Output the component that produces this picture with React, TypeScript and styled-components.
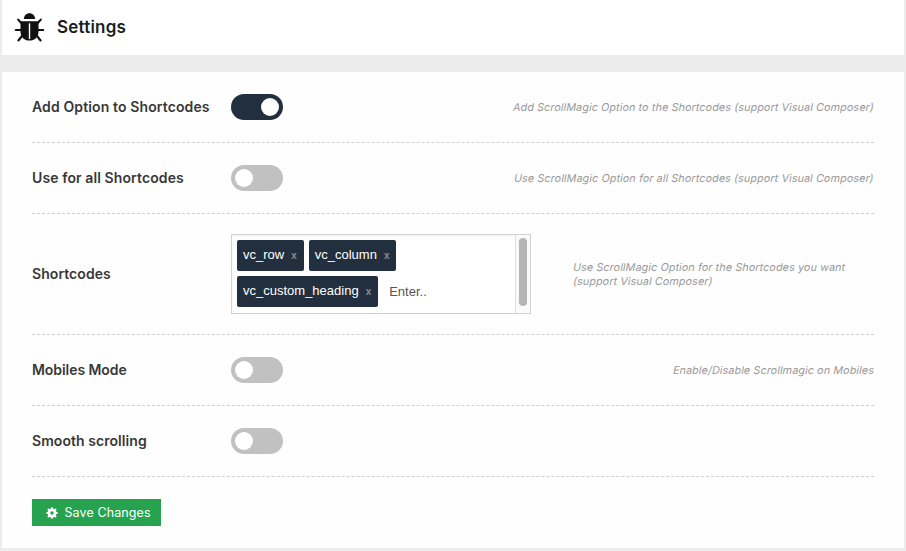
import React, { useState } from "react";
import styled, { createGlobalStyle } from "styled-components";

const GlobalStyle = createGlobalStyle`
  * { box-sizing: border-box; }
  body {
    margin: 0;
    background: #ececec;
    font-family: Inter, "Liberation Sans", sans-serif;
    overflow: hidden;
  }
`;

const Page = styled.div`
  display: flex;
  flex-direction: column;
  gap: 17px;
  height: 551px;
  padding: 0 2px 3px;
`;

const Header = styled.header`
  display: flex;
  align-items: center;
  height: 55px;
  padding-left: 12px;
  background: #fff;
`;

const Logo = styled.svg`
  display: block;
  width: 32px;
  height: 32px;
`;

const Title = styled.h1`
  margin: 0 0 2px 11px;
  font-size: 17px;
  line-height: 20px;
  font-weight: 600;
  letter-spacing: 0.2px;
  color: #191e23;
`;

const Panel = styled.main`
  flex: 1;
  padding: 0 30px;
  background: #fefefe;
`;

const Row = styled.section<{ $tall?: boolean }>`
  display: flex;
  align-items: center;
  height: ${(p) => (p.$tall ? 121 : 71)}px;
  border-bottom: 1px dashed #cfcfcf;
`;

const Label = styled.div<{ $spacing: number }>`
  flex: 0 0 199px;
  font-size: 14px;
  line-height: 18px;
  font-weight: 600;
  letter-spacing: ${(p) => p.$spacing}px;
  white-space: nowrap;
  color: #383838;
`;

const Switch = styled.button<{ $on: boolean }>`
  display: flex;
  align-items: center;
  justify-content: ${(p) => (p.$on ? "flex-end" : "flex-start")};
  width: 52px;
  height: 26px;
  padding: 0 4px;
  border: 0;
  border-radius: 13px;
  background: ${(p) => (p.$on ? "#222f3e" : "#c1c1c1")};
`;

const Knob = styled.span`
  width: 18px;
  height: 18px;
  border-radius: 50%;
  background: #fff;
`;

const Description = styled.p<{ $aside?: boolean }>`
  margin: ${(p) => (p.$aside ? "2px 0 0 42px" : "2px 0 0 auto")};
  font-size: 10.75px;
  line-height: 14px;
  letter-spacing: 0.115px;
  white-space: nowrap;
  color: #999;
`;

const Slanted = styled.span`
  display: block;
  transform: skewX(-11deg);
`;

const TagField = styled.div`
  display: flex;
  width: 300px;
  height: 80px;
  border: 1px solid #d2d2d2;
  background: #fff;
  box-shadow: inset 0 1px 2px rgba(0, 0, 0, 0.07);
  font-family: "Liberation Sans", sans-serif;
  font-size: 13px;
`;

const TagList = styled.div`
  display: flex;
  flex: 1;
  flex-wrap: wrap;
  align-content: flex-start;
  gap: 5px;
  padding: 5px;
`;

const Tag = styled.span`
  display: flex;
  align-items: center;
  height: 31px;
  padding: 0 6px 2px;
  border-radius: 2px;
  background: #222f3e;
  color: #fff;
`;

const Remove = styled.span`
  margin: 2px 1px 0 7px;
  font-size: 10px;
  font-weight: 700;
  color: #848b93;
`;

const TagInput = styled.input`
  width: 90px;
  height: 31px;
  padding: 0 0 0 6px;
  border: 0;
  outline: 0;
  background: transparent;
  font: inherit;
  color: #555;
  &::placeholder { color: #555; opacity: 1; }
`;

const ScrollTrack = styled.div`
  width: 15px;
  padding: 3px 3px 0;
  border-left: 1px solid #dedede;
  background: #fafafa;
`;

const ScrollThumb = styled.div`
  width: 8px;
  height: 68px;
  border-radius: 4px;
  background: #b5b5b5;
`;

const SaveButton = styled.button`
  display: flex;
  align-items: center;
  width: 129px;
  height: 27px;
  margin-top: 22px;
  padding: 0 0 0 14px;
  border: 0;
  background: #27a350;
  color: #fff;
  font-family: inherit;
  font-size: 12.5px;
  letter-spacing: 0.1px;
  white-space: nowrap;
`;

const Gear = styled.svg`
  width: 12px;
  height: 12px;
  margin-right: 6.5px;
`;

const BugIcon = () => (
  <Logo viewBox="0 0 32 32">
    <g fill="none" stroke="#111" strokeWidth="2.1" strokeLinecap="round" strokeLinejoin="round">
      <path d="M8 11.8 4.2 7.6M23 11.8l3.8-4.2M8 18H1.8M23 18h6.2M8 24l-3.6 4.5M23 24l3.6 4.5" />
    </g>
    <path fill="#111" d="M9.8 7C10 3.6 12.4 1.2 15.5 1.2s5.5 2.4 5.7 5.8z" />
    <path fill="#111" d="M6.5 9.3h18v10.2c0 5.8-3.9 9.1-9 9.1s-9-3.3-9-9.1z" />
    <path fill="none" stroke="#fff" strokeWidth="1.4" d="M15.5 11.3v15.7" />
  </Logo>
);

const GearIcon = () => (
  <Gear viewBox="0 0 24 24">
    <circle cx="12" cy="12" r="6.2" fill="none" stroke="#fff" strokeWidth="5.3" />
    <path stroke="#fff" strokeWidth="4.2" d="M12 .8v4M12 19.2v4M.8 12h4M19.2 12h4M4 4l3 3M17 17l3 3M4 20l3-3M17 7l3-3" />
  </Gear>
);

const Toggle = ({ initial = false, name }: { initial?: boolean; name: string }) => {
  const [on, setOn] = useState(initial);
  return (
    <Switch $on={on} role="switch" aria-checked={on} aria-label={name} onClick={() => setOn(!on)}>
      <Knob />
    </Switch>
  );
};

const tags = ["vc_row", "vc_column", "vc_custom_heading"];

export default function App() {
  return (
    <>
      <GlobalStyle />
      <Page>
        <Header>
          <BugIcon />
          <Title>Settings</Title>
        </Header>
        <Panel>
          <Row>
            <Label $spacing={0.12}>Add Option to Shortcodes</Label>
            <Toggle initial name="Add Option to Shortcodes" />
            <Description><Slanted>Add ScrollMagic Option to the Shortcodes (support Visual Composer)</Slanted></Description>
          </Row>
          <Row>
            <Label $spacing={0.1}>Use for all Shortcodes</Label>
            <Toggle name="Use for all Shortcodes" />
            <Description><Slanted>Use ScrollMagic Option for all Shortcodes (support Visual Composer)</Slanted></Description>
          </Row>
          <Row $tall>
            <Label $spacing={0.06}>Shortcodes</Label>
            <TagField>
              <TagList>
                {tags.map((tag) => (
                  <Tag key={tag}>{tag}<Remove>x</Remove></Tag>
                ))}
                <TagInput placeholder="Enter.." />
              </TagList>
              <ScrollTrack><ScrollThumb /></ScrollTrack>
            </TagField>
            <Description $aside>
              <Slanted>Use ScrollMagic Option for the Shortcodes you want</Slanted>
              <Slanted>(support Visual Composer)</Slanted>
            </Description>
          </Row>
          <Row>
            <Label $spacing={-0.06}>Mobiles Mode</Label>
            <Toggle name="Mobiles Mode" />
            <Description><Slanted>Enable/Disable Scrollmagic on Mobiles</Slanted></Description>
          </Row>
          <Row>
            <Label $spacing={0.06}>Smooth scrolling</Label>
            <Toggle name="Smooth scrolling" />
          </Row>
          <SaveButton><GearIcon />Save Changes</SaveButton>
        </Panel>
      </Page>
    </>
  );
}
